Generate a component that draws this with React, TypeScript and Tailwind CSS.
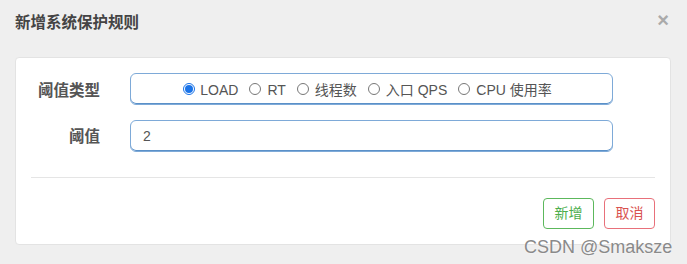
import React from "react";

const font = { fontFamily: '"Liberation Sans", "Noto Sans CJK SC", sans-serif' };

function Radio({ checked, label }: { checked?: boolean; label: string }) {
  return (
    <label className="flex items-center mr-[11px]">
      {checked ? (
        <span className="w-[12px] h-[12px] rounded-full border border-[#1a73e8] bg-white flex items-center justify-center mr-[5px]">
          <span className="w-[8px] h-[8px] rounded-full bg-[#1a73e8]" />
        </span>
      ) : (
        <span className="w-[12px] h-[12px] rounded-full border border-[#777] bg-white mr-[6px]" />
      )}
      <span className="text-[14px] text-[#555] pt-[3px]">{label}</span>
    </label>
  );
}

export default function App() {
  return (
    <div className="w-[687px] h-[264px] bg-[#efefef] relative overflow-hidden" style={font}>
      <div className="flex items-start justify-between pl-[15px] pr-[18px] pt-[13px] h-[57px]">
        <div className="text-[15.5px] font-bold text-[#444] leading-[20px]">新增系统保护规则</div>
        <div className="text-[#aaa] text-[20px] leading-[14px] font-bold">×</div>
      </div>
      <div className="mx-[15px] w-[656px] h-[188px] bg-white rounded-[4px] border border-[#e3e3e3] flex flex-col">
        <div className="flex items-center mt-[15px] h-[32px]">
          <div className="w-[84px] text-right text-[15.5px] font-bold text-[#555] pt-[3px]">阈值类型</div>
          <div className="ml-[30px] w-[483px] h-[32px] rounded-[6px] border border-[#7eaad8] shadow-[inset_0_-1px_0_#5a90c8] flex items-center justify-center pl-[3px]">
            <Radio checked label="LOAD" />
            <Radio label="RT" />
            <Radio label="线程数" />
            <Radio label="入口 QPS" />
            <Radio label="CPU 使用率" />
          </div>
        </div>
        <div className="flex items-center mt-[15px] h-[32px]">
          <div className="w-[84px] text-right text-[15.5px] font-bold text-[#555] pt-[2px]">阈值</div>
          <div className="ml-[30px] w-[483px] h-[32px] rounded-[6px] border border-[#7eaad8] shadow-[inset_0_-1px_0_#5a90c8] flex items-center pl-[12px] text-[14px] text-[#555]">
            2
          </div>
        </div>
        <div className="mx-[15px] mt-[25px] h-px bg-[#e5e5e5]" />
        <div className="flex justify-end gap-[10px] mr-[15px] mt-[20px]">
          <button className="w-[51px] h-[31px] rounded-[4px] border border-[#5cb85c] text-[#4cae4c] text-[14px] bg-white">新增</button>
          <button className="w-[51px] h-[31px] rounded-[4px] border border-[#e8707a] text-[#d9534f] text-[14px] bg-white">取消</button>
        </div>
      </div>
      <div className="absolute left-[524px] top-[236px] text-[18px] text-[#8a8a8a] leading-[22px] [text-shadow:0_0_2px_#fff]">CSDN @Smaksze</div>
    </div>
  );
}
